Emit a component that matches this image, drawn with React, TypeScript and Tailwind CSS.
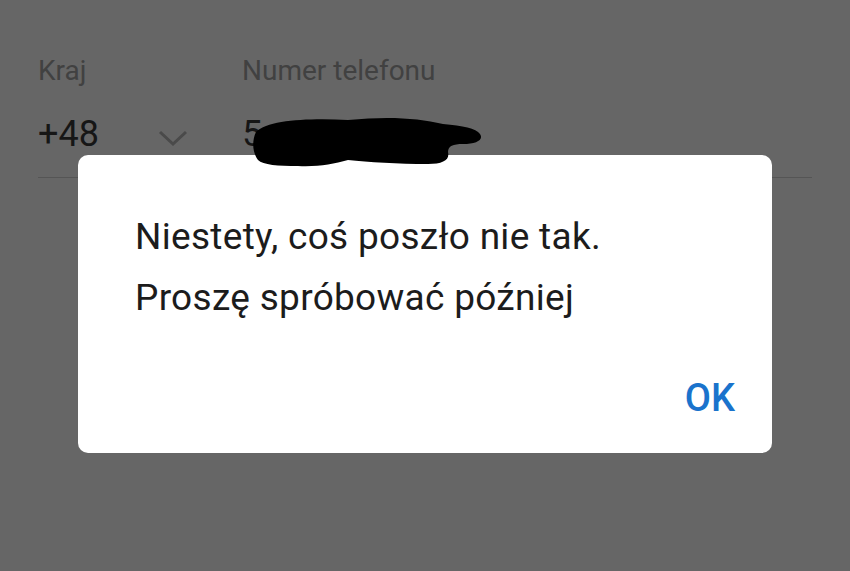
export default function App() {
  return (
    <div
      className="relative w-[850px] h-[571px] overflow-hidden bg-[#666666]"
      style={{ fontFamily: "Roboto, 'Noto Sans', sans-serif" }}
    >
      {/* form behind the scrim */}
      <div className="px-[38px] pt-[53px]">
        <div className="flex border-b border-[#555555] pb-[23px]">
          <div className="w-[204px]">
            <div className="text-[28px] leading-[36px] text-[#414141]">Kraj</div>
            <div className="mt-[25px] flex items-center gap-[59px]">
              <span className="text-[36px] leading-[40px] text-[#161616]">+48</span>
              <svg width="30" height="18" viewBox="0 0 30 18" className="mt-[8px]">
                <path d="M2 3 L15 15 L28 3" fill="none" stroke="#4a4a4a" strokeWidth="3" />
              </svg>
            </div>
          </div>
          <div className="flex-1">
            <div className="text-[28px] leading-[36px] text-[#414141]">Numer telefonu</div>
            <div className="mt-[25px] text-[36px] leading-[40px] text-[#161616]">5</div>
          </div>
        </div>
      </div>

      {/* dialog */}
      <div className="absolute left-[78px] top-[155px] w-[694px] h-[298px] rounded-[10px] bg-white flex flex-col">
        <div className="pl-[57px] pt-[51px] text-[37px] tracking-[0.3px] leading-[61px] text-[#1c1c1c]">
          <p>Niestety, coś poszło nie tak.</p>
          <p>Proszę spróbować później</p>
        </div>
        <div className="mt-auto flex justify-end pr-[37px] pb-[35px]">
          <button className="text-[38px] leading-[40px] font-medium text-[#1a73cc]">OK</button>
        </div>
      </div>

      {/* redaction scribble */}
      <svg className="absolute left-[248px] top-[112px]" width="236" height="56" viewBox="0 0 236 56">
        <path
          d="M8 20 C20 8 60 6 100 8 C140 4 170 6 195 12 C215 14 228 16 232 22 C236 28 228 32 215 32 C205 32 200 34 200 40 C202 48 195 52 180 52 C150 52 120 50 100 48 C85 52 70 55 50 54 C30 54 15 53 10 48 C4 40 4 28 8 20 Z"
          fill="#000000"
        />
      </svg>
    </div>
  );
}
